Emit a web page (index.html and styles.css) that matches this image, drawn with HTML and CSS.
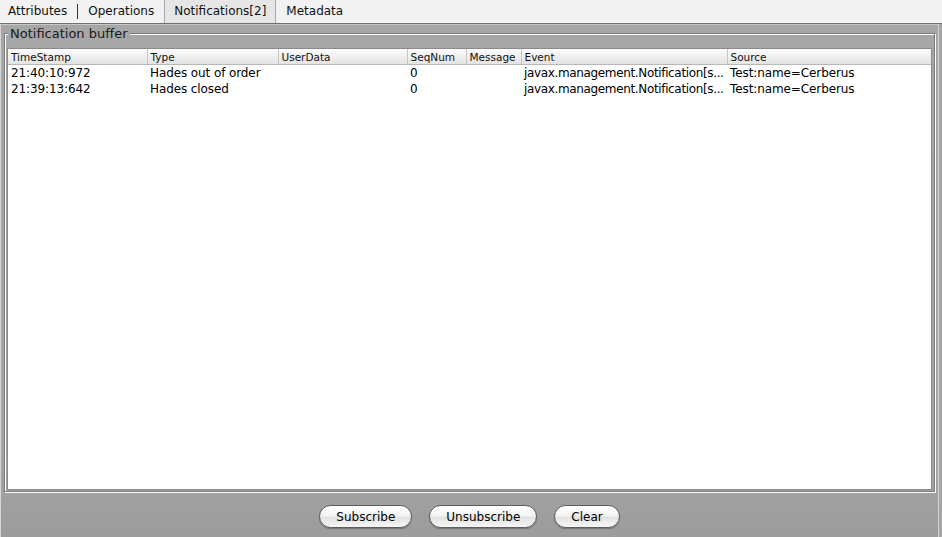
FILE: index.html
```html
<!DOCTYPE html>
<html lang="en">
<head>
    <meta charset="UTF-8">
    <title>Notifications</title>
    <link rel="stylesheet" href="styles.css">
</head>
<body>
    <div class="tabs">
        <span class="tab first">Attributes</span>
        <span class="sep"></span>
        <span class="tab">Operations</span>
        <span class="tab active">Notifications[2]</span>
        <span class="tab">Metadata</span>
    </div>

    <div class="panel">
        <fieldset class="buffer">
            <legend>Notification buffer</legend>
            <div class="scroll">
                <table>
                    <colgroup>
                        <col style="width:139px">
                        <col style="width:131px">
                        <col style="width:129px">
                        <col style="width:59px">
                        <col style="width:55px">
                        <col style="width:206px">
                        <col>
                    </colgroup>
                    <thead>
                        <tr>
                            <th>TimeStamp</th>
                            <th>Type</th>
                            <th>UserData</th>
                            <th>SeqNum</th>
                            <th>Message</th>
                            <th>Event</th>
                            <th>Source</th>
                        </tr>
                    </thead>
                    <tbody>
                        <tr>
                            <td>21:40:10:972</td>
                            <td>Hades out of order</td>
                            <td></td>
                            <td>0</td>
                            <td></td>
                            <td class="event">javax.management.Notification[s...</td>
                            <td>Test:name=Cerberus</td>
                        </tr>
                        <tr>
                            <td>21:39:13:642</td>
                            <td>Hades closed</td>
                            <td></td>
                            <td>0</td>
                            <td></td>
                            <td class="event">javax.management.Notification[s...</td>
                            <td>Test:name=Cerberus</td>
                        </tr>
                    </tbody>
                </table>
            </div>
        </fieldset>

        <div class="actions">
            <button>Subscribe</button>
            <button>Unsubscribe</button>
            <button>Clear</button>
        </div>
    </div>
</body>
</html>
```

FILE: styles.css
```css
body {
    margin: 0;
    width: 942px;
    height: 537px;
    display: flex;
    flex-direction: column;
    overflow: hidden;
    font-family: "DejaVu Sans", sans-serif;
    font-size: 12px;
    color: #000;
    background: #a4a4a4;
}

/* tab strip */
.tabs {
    height: 23px;
    display: flex;
    background: #f2f2f2;
    border-bottom: 1px solid #707070;
}
.tab {
    padding: 0 10px;
    line-height: 23px;
    color: #111;
}
.tab.first {
    padding-left: 8px;
}
.sep {
    width: 1px;
    margin: 4px 0;
    background: #333;
}
.tab.active {
    padding: 0 9px;
    background: #e6e6e6;
    border-left: 1px solid #a8a8a8;
    border-right: 1px solid #a8a8a8;
}

/* grey content panel */
.panel {
    flex: 1;
    min-height: 0;
    display: flex;
    flex-direction: column;
    margin-right: 3px;
    padding: 1px 3px 0 3px;
    border: 1px solid #d6d6d6;
    border-bottom: 0;
    border-top-color: #c8c8c8;
    background: linear-gradient(#a6a6a6, #a4a4a4 85%, #9c9c9c);
}

.buffer {
    flex: 1;
    min-height: 0;
    min-width: 0;
    display: flex;
    flex-direction: column;
    margin: 0;
    padding: 7px 2px 1px 2px;
    border: 1px solid #7c7c7c;
    box-shadow: inset 1px 1px 0 #fff, 1px 1px 0 #fff;
}
.buffer legend {
    margin-left: 1px;
    padding: 0 2px;
    font-size: 13px;
    line-height: 15px;
    color: #1a1a1a;
    background: #a6a6a6;
}

.scroll {
    flex: 1;
    overflow: hidden;
    background: #fff;
    border: 1px solid #8a8a8a;
}

table {
    width: 100%;
    table-layout: fixed;
    border-collapse: collapse;
}
th {
    height: 15px;
    padding: 0 3px;
    font-size: 10.5px;
    font-weight: normal;
    text-align: left;
    color: #111;
    background: linear-gradient(#fcfcfc, #efefef 50%, #e3e3e3);
    border-right: 1px solid #c6c6c6;
    border-bottom: 1px solid #b8b8b8;
    white-space: nowrap;
    overflow: hidden;
}
th:last-child {
    border-right: 0;
}
td {
    height: 16px;
    padding: 0 3px;
    line-height: 16px;
    letter-spacing: -0.1px;
    white-space: nowrap;
    overflow: hidden;
    text-overflow: ellipsis;
}
td.event {
    padding-right: 0;
    letter-spacing: -0.35px;
    text-overflow: clip;
}

/* buttons */
.actions {
    height: 45px;
    box-sizing: border-box;
    padding-top: 4px;
    display: flex;
    justify-content: center;
    align-items: center;
    gap: 17px;
}
button {
    height: 23px;
    padding: 0 16px;
    font-family: "DejaVu Sans", sans-serif;
    font-size: 12px;
    color: #000;
    border: 1px solid #5c5c5c;
    border-radius: 12px;
    background: linear-gradient(#ffffff, #f4f4f4 45%, #e2e2e2 55%, #f6f6f6);
    box-shadow: 0 1px 1px rgba(0,0,0,0.25);
    cursor: pointer;
}
```
